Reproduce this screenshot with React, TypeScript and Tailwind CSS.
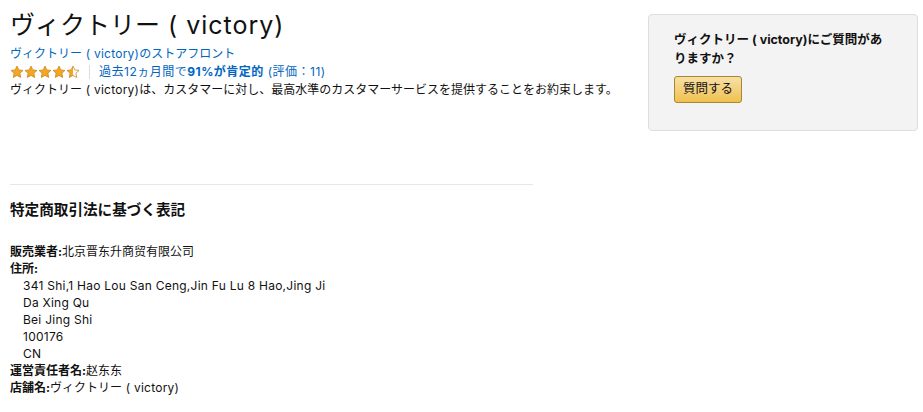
import React from "react";

const Star = ({ half = false }: { half?: boolean }) => (
  <svg width="14" height="14" viewBox="0 0 24 24">
    <defs>
      <linearGradient id="hg" x1="0" x2="1" y1="0" y2="0">
        <stop offset="50%" stopColor="#f5a623" />
        <stop offset="50%" stopColor="#ffffff" />
      </linearGradient>
    </defs>
    <path
      d="M12 1.8l3.1 6.6 7.1.9-5.2 4.9 1.3 7.1L12 17.8l-6.3 3.5 1.3-7.1L1.8 9.3l7.1-.9z"
      fill={half ? "url(#hg)" : "#f5a623"}
      stroke="#c7811a"
      strokeWidth="1.3"
      strokeLinejoin="round"
    />
  </svg>
);

const L = ({ children }: { children: React.ReactNode }) => (
  <span className="tracking-[0.25px]">{children}</span>
);

export default function App() {
  const font = {
    fontFamily: 'Inter, "Noto Sans CJK JP", sans-serif',
  };
  return (
    <div
      className="w-[923px] h-[412px] bg-white text-[#111] overflow-hidden flex"
      style={font}
    >
      <div className="flex-1 pl-[10px] pt-[8px]">
        <h1 className="text-[25px] leading-[34px] font-normal text-[#111]">
          ヴィクトリー<span className="tracking-[1px]"> ( victory)</span>
        </h1>
        <div className="text-[12px] leading-[18px] text-[#0066c0] mt-[3px]">
          ヴィクトリー<L> ( victory)</L>のストアフロント
        </div>
        <div className="flex items-center h-[18px] text-[12px]">
          <div className="flex">
            <Star />
            <Star />
            <Star />
            <Star />
            <Star half />
          </div>
          <div className="w-px h-[14px] bg-[#ddd] mx-[9px]" />
          <span className="text-[#0066c0] tracking-[0.5px]">
            過去12ヵ月間で<b>91%が肯定的</b> (評価：11)
          </span>
        </div>
        <div className="text-[12px] leading-[18px]">
          ヴィクトリー<L> ( victory)</L>は、カスタマーに対し、最高水準のカスタマーサービスを提供することをお約束します。
        </div>
        <div className="w-[523px] h-px bg-[#e7e7e7] mt-[85px]" />
        <h2 className="text-[14.6px] leading-[20px] font-bold mt-[15px]">
          特定商取引法に基づく表記
        </h2>
        <div className="text-[12px] leading-[17px] mt-[23px]">
          <div>
            <b>販売業者:</b>北京晋东升商贸有限公司
          </div>
          <div>
            <b>住所:</b>
          </div>
          <div className="pl-[13px] tracking-[0.25px]">
            <div>341 Shi,1 Hao Lou San Ceng,Jin Fu Lu 8 Hao,Jing Ji</div>
            <div>Da Xing Qu</div>
            <div>Bei Jing Shi</div>
            <div>100176</div>
            <div>CN</div>
          </div>
          <div>
            <b>運営責任者名:</b>赵东东
          </div>
          <div>
            <b>店舗名:</b>ヴィクトリー<L> ( victory)</L>
          </div>
        </div>
      </div>
      <div className="w-[275px] pt-[14px] pr-[5px]">
        <div className="w-[270px] h-[117px] bg-[#f3f3f3] border border-[#ddd] rounded-[4px] pl-[25px] pr-[30px] pt-[15px]">
          <div className="text-[12.5px] leading-[19px] font-bold">
            ヴィクトリー ( victory)にご質問がありますか？
          </div>
          <button className="mt-[8px] h-[27px] px-[8px] text-[12.5px] border border-[#a88734] rounded-[3px] bg-gradient-to-b from-[#f7dfa5] to-[#f0c14b] text-[#111]">
            質問する
          </button>
        </div>
      </div>
    </div>
  );
}
